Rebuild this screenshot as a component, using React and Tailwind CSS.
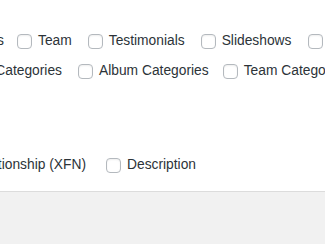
const Box = () => (
  <span className="w-[15px] h-[15px] shrink-0 rounded-[4px] border border-[#b4b9be] bg-white shadow-[inset_0_1px_2px_rgba(0,0,0,0.07)]" />
);

const Option = ({ label, gap = 16 }) => (
  <label className="flex items-center shrink-0" style={{ marginRight: gap }}>
    <Box />
    <span className="ml-[6px] whitespace-nowrap">{label}</span>
  </label>
);

// first label of each row runs off the left edge of the shot
const Clipped = ({ text, w, mr }) => (
  <div
    className="flex justify-end overflow-hidden whitespace-nowrap shrink-0"
    style={{ width: w, marginRight: mr }}
  >
    <span>{text}</span>
  </div>
);

export default function App() {
  return (
    <div className="w-[325px] h-[244px] overflow-hidden bg-[#f1f1f1] font-['Liberation_Sans',Arial,sans-serif] text-[13.8px] text-[#2c3338]">
      <div className="bg-white border-b border-[#dcdcdc] pt-[26px] pb-[11px]">
        <div className="flex items-center h-[30px] overflow-hidden">
          <Clipped text="Portfolios" w={4} mr={13} />
          <Option label="Team" />
          <Option label="Testimonials" />
          <Option label="Slideshows" gap={17} />
          <Option label="Albums" gap={0} />
        </div>
        <div className="flex items-center h-[30px] overflow-hidden">
          <Clipped text="Portfolio Categories" w={62} mr={16} />
          <Option label="Album Categories" gap={14} />
          <Option label="Team Categories" gap={0} />
        </div>
        <div className="flex items-center h-[30px] mt-[64px] overflow-hidden">
          <Clipped text="Link Relationship (XFN)" w={86} mr={20} />
          <Option label="Description" gap={0} />
        </div>
      </div>
    </div>
  );
}
